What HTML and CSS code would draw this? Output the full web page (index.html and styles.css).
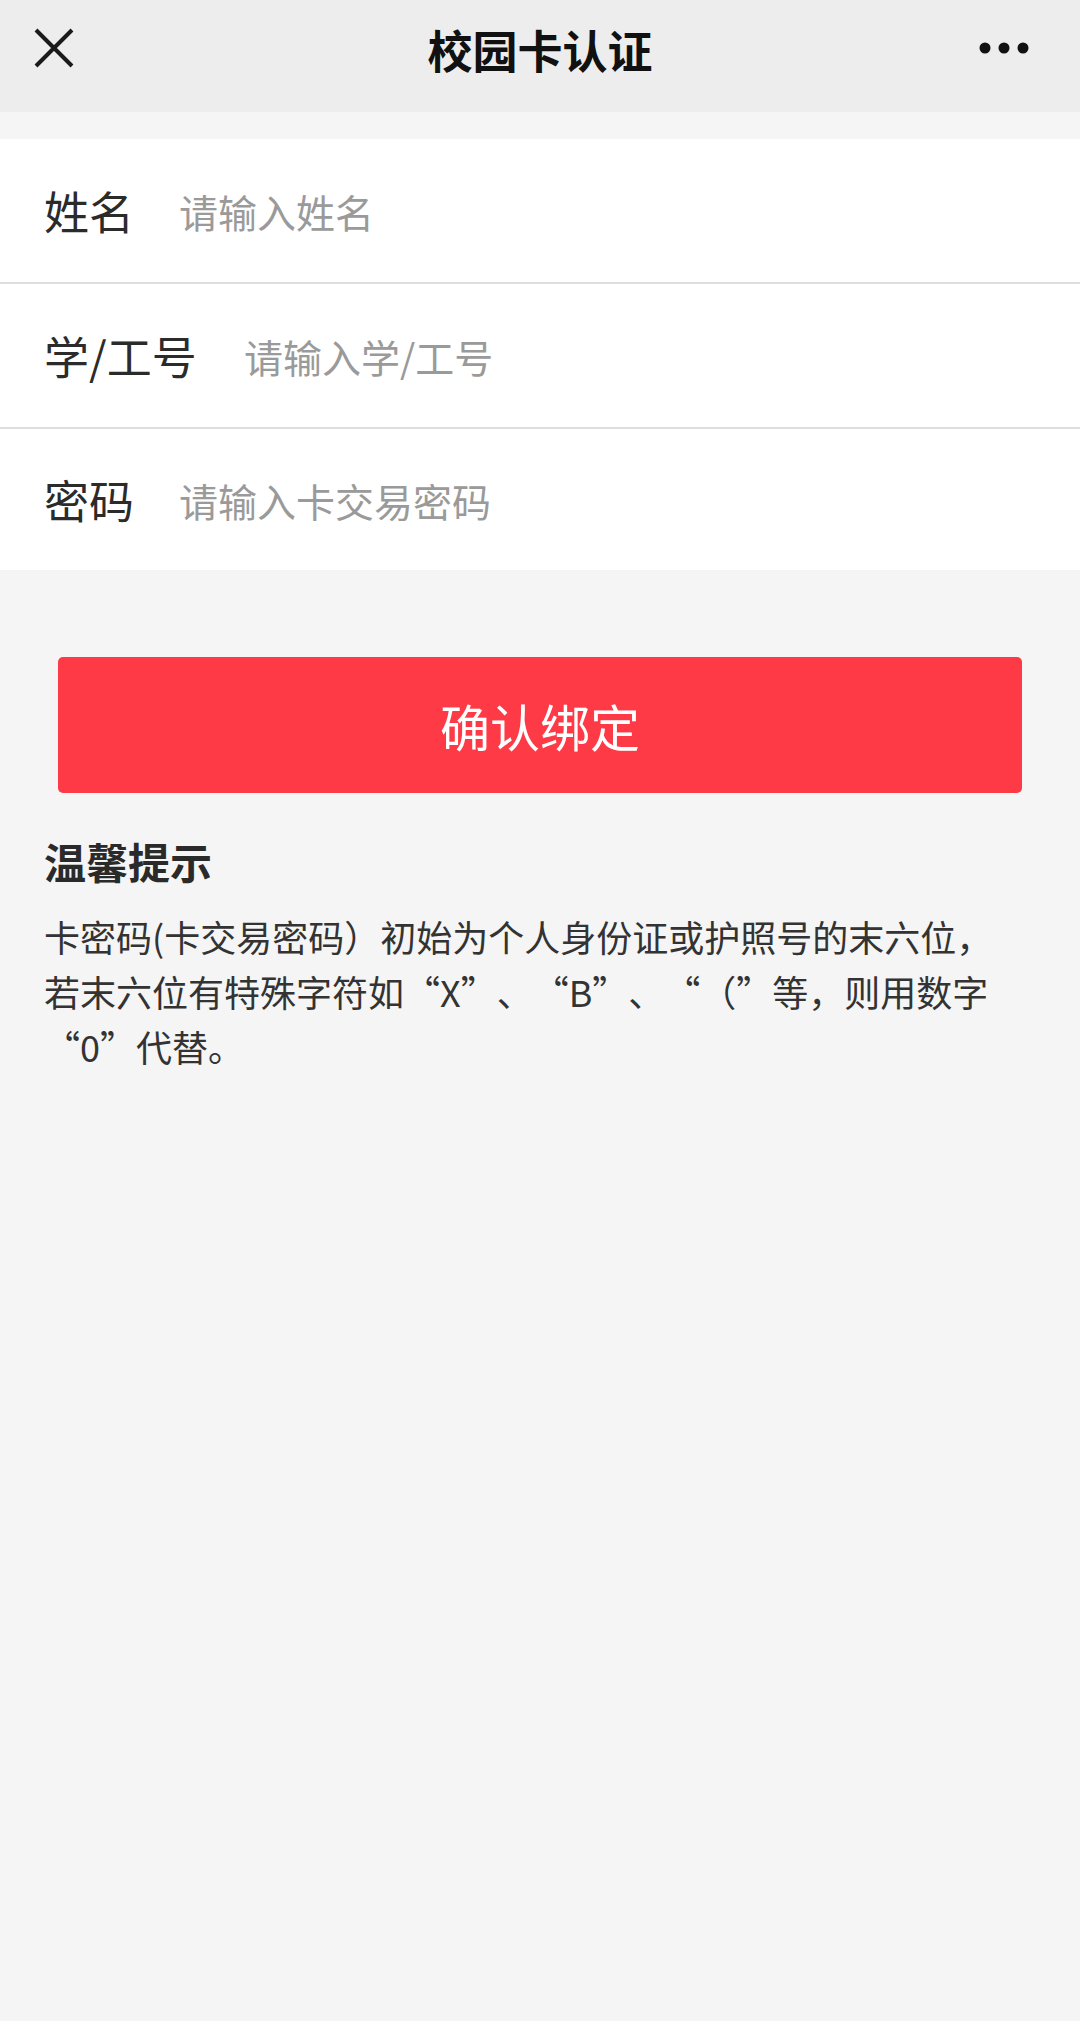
FILE: index.html
```html
<!DOCTYPE html>
<html lang="zh-CN">
<head>
    <meta charset="UTF-8">
    <meta name="viewport" content="width=device-width, initial-scale=1.0">
    <title>校园卡认证</title>
    <link rel="stylesheet" href="styles.css">
</head>
<body>
    <div class="top-bar">
        <span class="close-btn">
            <svg width="40" height="40" viewBox="0 0 40 40">
                <path d="M2 2 L38 38 M38 2 L2 38" stroke="#1a1a1a" stroke-width="4" fill="none"/>
            </svg>
        </span>
        <h1 class="title">校园卡认证</h1>
        <span class="more-btn">
            <svg width="50" height="12" viewBox="0 0 50 12">
                <circle cx="6" cy="6" r="5.5" fill="#111"/>
                <circle cx="25" cy="6" r="5.5" fill="#111"/>
                <circle cx="44" cy="6" r="5.5" fill="#111"/>
            </svg>
        </span>
    </div>

    <div class="form">
        <div class="form-row">
            <label class="label">姓名</label>
            <span class="placeholder">请输入姓名</span>
        </div>
        <div class="form-row">
            <label class="label">学/工号</label>
            <span class="placeholder">请输入学/工号</span>
        </div>
        <div class="form-row">
            <label class="label">密码</label>
            <span class="placeholder">请输入卡交易密码</span>
        </div>
    </div>

    <div class="btn-wrap">
        <button class="btn">确认绑定</button>
    </div>

    <div class="tips">
        <h2>温馨提示</h2>
        <p>卡密码(卡交易密码）初始为个人身份证或护照号的末六位，<br>若末六位有特殊字符如“X”、“B”、“（”等，则用数字<br>“0”代替。</p>
    </div>
</body>
</html>
```

FILE: styles.css
```css
body {
    margin: 0;
    background-color: #f5f5f5;
    font-family: "Noto Sans CJK SC", "Noto Sans", sans-serif;
    color: #333;
}
.top-bar {
    height: 112px;
    background: #ededed;
    display: flex;
    align-items: center;
    justify-content: space-between;
    padding: 0 51px 0 34px;
    position: relative;
}
.close-btn {
    display: flex;
    margin-top: -16px;
}
.more-btn {
    display: flex;
    margin-top: -16px;
}
.title {
    position: absolute;
    left: 0;
    right: 0;
    top: 20px;
    margin: 0;
    text-align: center;
    font-size: 45px;
    font-weight: bold;
    color: #111;
    line-height: 60px;
    pointer-events: none;
}
.form {
    margin-top: 27px;
    background: white;
}
.form-row {
    display: flex;
    align-items: center;
    height: 143px;
    padding-left: 44px;
    border-bottom: 2px solid #dedede;
}
.form-row:last-child {
    border-bottom: none;
    height: 141px;
}
.label {
    font-size: 45px;
    color: #2b2b2b;
    min-width: 135px;
}
.form-row:nth-child(2) .label {
    min-width: 200px;
}
.placeholder {
    font-size: 39px;
    color: #9a9a9a;
}
.btn-wrap {
    padding: 87px 58px 0;
}
.btn {
    display: block;
    width: 100%;
    height: 136px;
    border: none;
    border-radius: 5px;
    background: #fd3a45;
    color: white;
    font-family: inherit;
    font-size: 50px;
    cursor: pointer;
}
.tips {
    padding: 40px 44px 0;
}
.tips h2 {
    margin: 0;
    font-size: 42px;
    font-weight: bold;
    color: #2a2a2a;
    line-height: 56px;
}
.tips p {
    margin: 20px 0 0;
    font-size: 36px;
    line-height: 55px;
    color: #333;
    text-spacing-trim: space-all;
}
```
